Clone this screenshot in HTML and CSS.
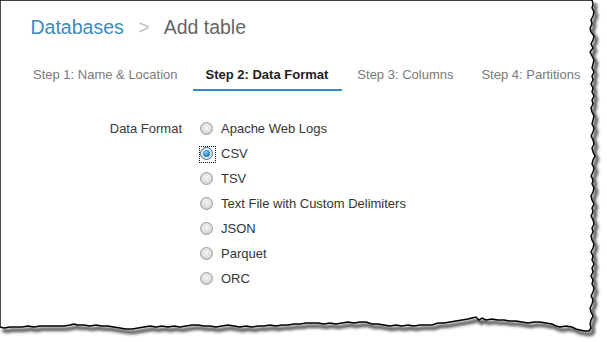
FILE: index.html
```html
<!DOCTYPE html>
<html>
<head>
<meta charset="utf-8">
<link rel="stylesheet" href="styles.css">
</head>
<body>
<div class="sheet">
  <svg class="torn" width="607" height="342" viewBox="0 0 607 342" aria-hidden="true">
    <defs>
      <filter id="blur" x="-5%" y="-5%" width="110%" height="110%">
        <feGaussianBlur stdDeviation="1.7"/>
      </filter>
    </defs>
    <polyline class="edge-shadow" filter="url(#blur)" transform="translate(2.5 3.2)"
      points="592,0 593,4 592,8 594,12 593,16 591,20 592,24 590,28 591,32 594,36 593,40 591,44 593,48 590,52 592,56 594,60 593,64 592,68 594,72 592,76 593,80 591,84 593,88 592,92 594,96 592,100 593,104 591,108 592,112 594,116 593,120 592,124 594,128 593,132 591,136 593,140 594,144 592,148 593,152 595,156 593,160 592,164 594,168 593,172 591,176 593,180 592,184 594,188 593,192 591,196 592,200 594,204 592,208 593,212 591,216 593,220 594,224 592,228 593,232 591,236 592,240 594,244 593,248 591,252 593,256 592,260 594,264 592,268 593,272 591,276 593,280 592,284 594,288 593,292 591,296 593,300 592,304 590,308 591,312 593,316 591,320 590,324 591,328 589,331 585,331 580,330 576,329 572,327 566,326 560,327 556,326 552,324 546,323 540,322 534,322 528,323 522,322 516,321 510,321 504,320 498,320 492,319 486,320 482,318 479,320 476,317 472,318 468,319 462,320 456,321 450,322 444,323 438,323 432,325 426,325 420,325 414,326 408,325 402,326 396,325 390,326 384,325 378,324 372,324 366,322 360,322 354,323 348,322 342,323 336,324 330,323 324,324 318,323 312,323 306,323 300,324 294,324 288,325 282,325 276,326 270,325 264,326 258,326 252,327 246,326 240,327 234,326 228,325 222,326 216,327 210,326 204,326 198,325 192,325 186,326 180,327 174,326 168,327 162,326 156,327 150,326 144,327 138,328 132,329 126,329 120,328 114,327 108,326 102,326 96,325 90,326 84,325 78,325 74,324 70,325 64,326 58,326 52,326 46,326 40,326 34,327 28,326 22,327 16,327 10,327 4,328 0,327"/>
    <polygon class="paper"
      points="0,0 592,0 593,4 592,8 594,12 593,16 591,20 592,24 590,28 591,32 594,36 593,40 591,44 593,48 590,52 592,56 594,60 593,64 592,68 594,72 592,76 593,80 591,84 593,88 592,92 594,96 592,100 593,104 591,108 592,112 594,116 593,120 592,124 594,128 593,132 591,136 593,140 594,144 592,148 593,152 595,156 593,160 592,164 594,168 593,172 591,176 593,180 592,184 594,188 593,192 591,196 592,200 594,204 592,208 593,212 591,216 593,220 594,224 592,228 593,232 591,236 592,240 594,244 593,248 591,252 593,256 592,260 594,264 592,268 593,272 591,276 593,280 592,284 594,288 593,292 591,296 593,300 592,304 590,308 591,312 593,316 591,320 590,324 591,328 589,331 585,331 580,330 576,329 572,327 566,326 560,327 556,326 552,324 546,323 540,322 534,322 528,323 522,322 516,321 510,321 504,320 498,320 492,319 486,320 482,318 479,320 476,317 472,318 468,319 462,320 456,321 450,322 444,323 438,323 432,325 426,325 420,325 414,326 408,325 402,326 396,325 390,326 384,325 378,324 372,324 366,322 360,322 354,323 348,322 342,323 336,324 330,323 324,324 318,323 312,323 306,323 300,324 294,324 288,325 282,325 276,326 270,325 264,326 258,326 252,327 246,326 240,327 234,326 228,325 222,326 216,327 210,326 204,326 198,325 192,325 186,326 180,327 174,326 168,327 162,326 156,327 150,326 144,327 138,328 132,329 126,329 120,328 114,327 108,326 102,326 96,325 90,326 84,325 78,325 74,324 70,325 64,326 58,326 52,326 46,326 40,326 34,327 28,326 22,327 16,327 10,327 4,328 0,327"/>
  </svg>

  <div class="content">
    <header class="crumbs">
      <span class="crumb-link">Databases</span><span class="crumb-sep">&gt;</span><span class="crumb-current">Add table</span>
    </header>

    <nav class="tabs">
      <span class="tab">Step 1: Name &amp; Location</span>
      <span class="tab active">Step 2: Data Format</span>
      <span class="tab">Step 3: Columns</span>
      <span class="tab">Step 4: Partitions</span>
    </nav>

    <div class="form">
      <div class="form-label">Data Format</div>
      <div class="options">
        <div class="option"><span class="radio"></span>Apache Web Logs</div>
        <div class="option"><span class="radio checked"></span>CSV</div>
        <div class="option"><span class="radio"></span>TSV</div>
        <div class="option"><span class="radio"></span>Text File with Custom Delimiters</div>
        <div class="option"><span class="radio"></span>JSON</div>
        <div class="option"><span class="radio"></span>Parquet</div>
        <div class="option"><span class="radio"></span>ORC</div>
      </div>
    </div>
  </div>
</div>
</body>
</html>
```

FILE: styles.css
```css
* { box-sizing: border-box; }

html, body {
  margin: 0;
  padding: 0;
  background: #ffffff;
}

body {
  font-family: "Liberation Sans", Arial, sans-serif;
  color: #333333;
}

.sheet {
  position: relative;
  width: 607px;
  height: 342px;
  overflow: hidden;
  background: #ffffff;
}

.torn {
  position: absolute;
  left: 0;
  top: 0;
  z-index: 0;
}

.edge-shadow {
  fill: none;
  stroke: #3c3c3c;
  stroke-width: 3.6;
  stroke-linejoin: round;
  opacity: 0.9;
}

.paper {
  fill: #ffffff;
  stroke: #000000;
  stroke-width: 1.4;
  stroke-linejoin: miter;
}

.content {
  position: relative;
  z-index: 1;
}

/* breadcrumb title */
.crumbs {
  padding: 14.5px 0 0 30.5px;
  font-size: 19.5px;
  line-height: 24px;
  white-space: nowrap;
}

.crumb-link {
  color: #3a8cc0;
}

.crumb-sep {
  color: #c4c4c4;
  margin: 0 14px 0 14.5px;
}

.crumb-current {
  color: #666666;
}

/* step tabs */
.tabs {
  display: flex;
  gap: 2px;
  margin-top: 19px;
  padding-left: 20px;
  font-size: 13px;
  line-height: 18px;
  white-space: nowrap;
}

.tab {
  padding: 8px 13px 5.5px;
  border-bottom: 2px solid transparent;
  color: #7a7a7a;
}

.tab.active {
  color: #222222;
  font-weight: bold;
  border-bottom-color: #338bc0;
  padding-right: 14px;
}

/* form */
.form {
  display: grid;
  grid-template-columns: 182px 1fr;
  column-gap: 18px;
  margin-top: 24.5px;
  font-size: 13px;
  line-height: 25px;
}

.form-label {
  text-align: right;
  color: #3a3a3a;
}

.options {
  display: flex;
  flex-direction: column;
}

.option {
  display: flex;
  align-items: center;
  height: 25px;
  color: #353535;
  white-space: nowrap;
}

.radio {
  position: relative;
  flex: none;
  width: 13px;
  height: 13px;
  margin-right: 8px;
  border-radius: 50%;
  border: 1px solid #9c9c9c;
  background: radial-gradient(circle at 50% 40%, #f4f4f4 0%, #e2e2e2 45%, #c2c2c2 100%);
}

.radio.checked {
  border-color: #3d6f98;
  background: radial-gradient(circle at 50% 45%, #ffffff 0%, #e4eaf0 60%, #c2ccd6 100%);
}

.radio.checked::before {
  content: "";
  position: absolute;
  left: 2px;
  top: 2px;
  width: 7px;
  height: 7px;
  border-radius: 50%;
  background: radial-gradient(circle at 40% 35%, #8fd0ff 0%, #2f8fd6 45%, #0f5a9a 100%);
}

.radio.checked::after {
  content: "";
  position: absolute;
  left: -2px;
  top: -2px;
  width: 15px;
  height: 15px;
  border: 1px dotted #111111;
}
```
